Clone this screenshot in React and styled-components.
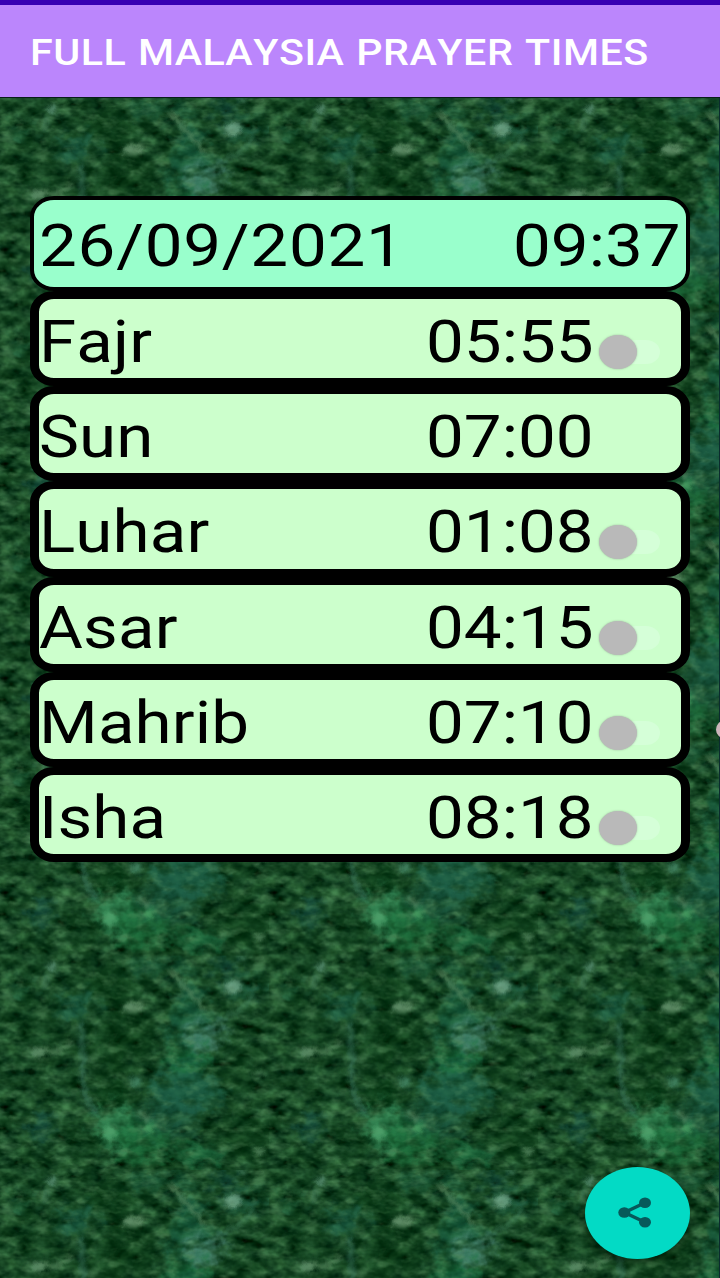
import React from "react";
import styled, { createGlobalStyle } from "styled-components";

const GlobalStyle = createGlobalStyle`
  * {
    box-sizing: border-box;
  }

  body {
    margin: 0;
    background: #0d4423;
    font-family: Roboto, "Noto Sans", sans-serif;
    font-kerning: none;
  }
`;

const Screen = styled.div`
  position: relative;
  display: flex;
  flex-direction: column;
  width: 720px;
  height: 1278px;
  overflow: hidden;
`;

const StatusBar = styled.div`
  flex: none;
  height: 5px;
  background: #3700b3;
`;

const Header = styled.header`
  flex: none;
  display: flex;
  align-items: center;
  height: 92px;
  padding: 3px 30px 0;
  background: #bb86fc;
`;

const Title = styled.h1`
  margin: 0;
  color: #fff;
  font-size: 36px;
  font-weight: 500;
  line-height: 44px;
  word-spacing: 0.8px;
  letter-spacing: 0.47px;
  white-space: nowrap;
  transform: scaleX(1.145);
  transform-origin: left center;
`;

const Body = styled.main`
  flex: 1;
  display: grid;
  min-height: 0;
  border-top: 1px solid #071d18;
`;

const Marble = styled.svg`
  grid-area: 1 / 1;
  width: 720px;
  height: 1180px;
`;

const Times = styled.section`
  grid-area: 1 / 1;
  z-index: 1;
  display: flex;
  flex-direction: column;
  padding: 97.5px 30px 0;
`;

const Row = styled.div`
  display: flex;
  align-items: flex-start;
  height: 95.25px;
  border: solid #000;
  border-width: ${(p) => (p.$today ? "4px 4px" : "8px 9px")};
  border-radius: 24px / 21px;
  background: ${(p) => (p.$today ? "#99ffcc" : "#ccffcc")};
  padding: ${(p) => (p.$today ? "12px 5px 0" : "9px 0 0")};
`;

const Text = styled.span`
  width: ${(p) => p.$width}px;
  color: #000;
  font-size: 58.8px;
  line-height: 68px;
  letter-spacing: ${(p) => p.$spacing || 0}px;
  white-space: nowrap;

  span {
    display: inline-block;
    transform: scaleX(1.145);
    transform-origin: left center;
  }
`;

const Switch = styled.div`
  display: flex;
  align-items: center;
  width: 62px;
  height: 35px;
  margin-top: 26.5px;
`;

const Thumb = styled.div`
  width: 38px;
  height: 34px;
  border-radius: 50%;
  background: #b9b9b9;
  box-shadow: 0 0 2px rgba(120, 130, 120, 0.6);
  z-index: 1;
`;

const Track = styled.div`
  width: 44px;
  height: 24px;
  margin-left: -21px;
  border-radius: 14px / 12px;
  background: #d5ffd8;
`;

const ShareButton = styled.button`
  position: absolute;
  right: 30px;
  bottom: 19px;
  display: flex;
  align-items: center;
  justify-content: center;
  width: 105px;
  height: 92px;
  padding: 0 5px 0 0;
  border: 0;
  border-radius: 50%;
  background: #03dac5;
  box-shadow: 0 3px 9px rgba(0, 20, 5, 0.6);
`;

const EdgeDot = styled.div`
  position: absolute;
  top: 721px;
  right: -12px;
  width: 16px;
  height: 17px;
  border-radius: 50%;
  background: #cdb5bb;
`;

const times = [
  { name: "Fajr", time: "05:55", alarm: true },
  { name: "Sun", time: "07:00", alarm: false },
  { name: "Luhar", time: "01:08", alarm: true },
  { name: "Asar", time: "04:15", alarm: true },
  { name: "Mahrib", time: "07:10", alarm: true },
  { name: "Isha", time: "08:18", alarm: true },
];

// soft patches in one marble tile: x, y, rx, ry, colour, opacity
const patches = [
  [110, 32, 32, 14, "#00300c", 0.6],
  [112, 137, 20, 11, "#00300c", 0.8],
  [85, 190, 14, 16, "#00300c", 0.4],
  [245, 180, 24, 26, "#00300c", 0.5],
  [127, 8, 14, 9, "#00300c", 0.6],
  [120, 85, 34, 30, "#00300c", 0.45],
  [235, 110, 24, 40, "#00300c", 0.3],
  [40, 70, 24, 20, "#00300c", 0.3],
  [190, 65, 20, 36, "#1e7050", 0.65],
  [205, 80, 22, 14, "#4f8b78", 0.9],
  [186, 104, 20, 14, "#1f7a48", 0.85],
  [186, 136, 38, 24, "#20664f", 0.9],
  [116, 172, 20, 24, "#38905b", 1],
  [144, 184, 26, 22, "#1f7440", 0.9],
  [197, 198, 26, 10, "#1f7546", 0.8],
  [168, 165, 34, 20, "#1f604a", 0.5],
  [160, 12, 36, 8, "#1b6448", 0.55],
  [77, 49, 20, 12, "#24705c", 0.6],
  [42, 172, 10, 16, "#1d5f55", 0.6],
  [22, 32, 14, 6, "#2c8560", 0.5],
  [245, 32, 22, 9, "#25705a", 0.6],
  [225, 13, 12, 9, "#21635a", 0.6],
];

const specks = [
  [233, 31, 9, 6, "#85b99b"],
  [133, 52, 11, 5, "#78a47e"],
  [38, 97, 9, 5, "#6fa27a"],
  [52, 12, 5, 4, "#6aa386"],
  [260, 196, 5, 4, "#689c70"],
  [136, 126, 5, 6, "#4b9270"],
  [258, 118, 7, 3, "#568a5f"],
  [149, 173, 5, 5, "#4aa565"],
  [110, 178, 6, 9, "#4fa56e"],
];

function Background() {
  return (
    <Marble viewBox="0 0 720 1180" preserveAspectRatio="none">
      <defs>
        <filter id="grain" x="0" y="0" width="269" height="214.4" filterUnits="userSpaceOnUse" colorInterpolationFilters="sRGB">
          <feTurbulence type="fractalNoise" baseFrequency="0.055 0.09" numOctaves="3" seed="7" stitchTiles="stitch" />
          <feColorMatrix values="0.45 0 0 0 -0.135  0.62 0 0 0 -0.035  0.44 0.04 0 0 -0.1  0 0 0 0 1" />
        </filter>
        <filter id="veil" x="0" y="0" width="269" height="214.4" filterUnits="userSpaceOnUse" colorInterpolationFilters="sRGB">
          <feTurbulence type="fractalNoise" baseFrequency="0.06 0.11" numOctaves="3" seed="21" stitchTiles="stitch" />
          <feColorMatrix values="0 0 0 0 0.38  0 0 0 0 0.6  0 0 0 0 0.4  3 0 0 0 -1.5" />
        </filter>
        <filter id="shade" x="0" y="0" width="269" height="214.4" filterUnits="userSpaceOnUse" colorInterpolationFilters="sRGB">
          <feTurbulence type="fractalNoise" baseFrequency="0.065 0.1" numOctaves="3" seed="12" stitchTiles="stitch" />
          <feColorMatrix values="0 0 0 0 0  0 0 0 0 0.17  0 0 0 0 0.05  3 0 0 0 -1.35" />
        </filter>
        <filter id="soft" x="-30" y="-30" width="330" height="275" filterUnits="userSpaceOnUse" colorInterpolationFilters="sRGB">
          <feGaussianBlur stdDeviation="5" result="b" />
          <feTurbulence type="fractalNoise" baseFrequency="0.07 0.09" numOctaves="3" seed="4" result="n" />
          <feDisplacementMap in="b" in2="n" scale="34" xChannelSelector="R" yChannelSelector="G" />
        </filter>
        <filter id="fine" x="-10" y="-10" width="290" height="235" filterUnits="userSpaceOnUse" colorInterpolationFilters="sRGB">
          <feGaussianBlur stdDeviation="1.9" result="b" />
          <feTurbulence type="fractalNoise" baseFrequency="0.12" numOctaves="2" seed="9" result="n" />
          <feDisplacementMap in="b" in2="n" scale="7" xChannelSelector="R" yChannelSelector="G" />
        </filter>
        <pattern id="marble" width="269" height="214.4" patternUnits="userSpaceOnUse">
          <rect width="269" height="214.4" filter="url(#grain)" />
          <g filter="url(#soft)">
            {patches.map(([x, y, rx, ry, fill, opacity]) => (
              <ellipse key={`${x}-${y}`} cx={x} cy={y} rx={rx} ry={ry} fill={fill} opacity={opacity * 0.8} />
            ))}
          </g>
          <rect width="269" height="214.4" filter="url(#veil)" opacity="0.45" />
          <rect width="269" height="214.4" filter="url(#shade)" opacity="0.5" />
          <g filter="url(#fine)">
            {specks.map(([x, y, rx, ry, fill]) => (
              <ellipse key={`${x}-${y}`} cx={x} cy={y} rx={rx} ry={ry} fill={fill} opacity="0.7" />
            ))}
            <g fill="none" stroke="#6d9c72" strokeWidth="3.6" opacity="0.7">
              <path d="M168 15l9 5 8 13 12 12 8 10" />
              <path d="M38 97l20-2 15-8" />
              <path d="M81 66l2 38-1 24 7 20 8 11" stroke="#43806a" />
              <path d="M139 155l10 10" />
              <path d="M226 62l14-8 14-14" stroke="#427e5b" />
              <path d="M48 20l-4 12M246 6l-7-8" stroke="#4c8767" />
            </g>
          </g>
        </pattern>
      </defs>
      <rect width="720" height="1180" fill="url(#marble)" />
      <rect x="719" width="1" height="1180" fill="#0b2b2e" />
    </Marble>
  );
}

function PrayerRow({ name, time, alarm }) {
  return (
    <Row>
      <Text $width={386.5} $spacing={0.1}>
        <span>{name}</span>
      </Text>
      <Text $width={173.5}>
        <span>{time}</span>
      </Text>
      {alarm && (
        <Switch>
          <Thumb />
          <Track />
        </Switch>
      )}
    </Row>
  );
}

export default function App() {
  return (
    <Screen>
      <GlobalStyle />
      <StatusBar />
      <Header>
        <Title>FULL MALAYSIA PRAYER TIMES</Title>
      </Header>
      <Body>
        <Background />
        <Times>
          <Row $today>
            <Text $width={474} $spacing={0.65}>
              <span>26/09/2021</span>
            </Text>
            <Text $width={168}>
              <span>09:37</span>
            </Text>
          </Row>
          {times.map((t) => (
            <PrayerRow key={t.name} {...t} />
          ))}
        </Times>
      </Body>
      <EdgeDot />
      <ShareButton aria-label="Share">
        <svg width="34" height="32" viewBox="0 0 34 32">
          <path d="M27.5 5.5L6.5 15.5l21 10" fill="none" stroke="#07595a" strokeWidth="3.4" />
          <g fill="#07595a">
            <ellipse cx="27" cy="5.7" rx="6" ry="5.3" />
            <ellipse cx="6.3" cy="15.5" rx="6" ry="5.3" />
            <ellipse cx="27" cy="25.3" rx="6" ry="5.3" />
          </g>
        </svg>
      </ShareButton>
    </Screen>
  );
}
